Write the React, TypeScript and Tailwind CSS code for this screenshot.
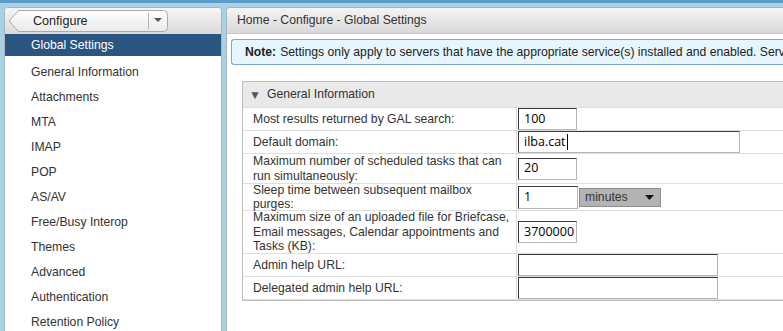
import React from 'react';

const NAV_ITEMS = [
  'General Information',
  'Attachments',
  'MTA',
  'IMAP',
  'POP',
  'AS/AV',
  'Free/Busy Interop',
  'Themes',
  'Advanced',
  'Authentication',
  'Retention Policy',
];

const inputBorder = 'border border-t-[#3a3a3a] border-l-[#3a3a3a] border-r-[#b5b5b5] border-b-[#b5b5b5] bg-white';
const inputText = "text-[12.5px] text-black font-['Open_Sans',sans-serif] px-[5px] leading-none flex items-center";

function TextBox({ value, width, height = 22, caret }: { value?: string; width: number; height?: number; caret?: boolean }) {
  return (
    <div className={`${inputBorder} ${inputText}`} style={{ width, height }}>
      {value}
      {caret && <span className="ml-px inline-block h-[16px] w-px bg-black" />}
    </div>
  );
}

function Row({ height, label, children }: { height: number; label: React.ReactNode; children: React.ReactNode }) {
  return (
    <div className="flex border-b border-[#dedede]" style={{ height }}>
      <div className="flex w-[274px] shrink-0 items-center whitespace-nowrap border-r border-[#dedede] pl-[10px] text-[12.2px] leading-[14.5px] text-[#333]">
        {label}
      </div>
      <div className="flex items-center pl-px">{children}</div>
    </div>
  );
}

export default function App() {
  return (
    <div className="h-[331px] w-[783px] overflow-hidden bg-[#a9d1e5] font-['Liberation_Sans',Arial,sans-serif]">
      <div className="h-[3px] bg-[#5c9ccb]" />
      <div className="flex gap-[4px] pl-[4px] pt-[4px]">
        {/* left nav */}
        <aside className="h-[330px] w-[218px] shrink-0 overflow-hidden rounded-t-[4px] border border-[#a9b4bb] bg-white">
          <div className="flex h-[26px] items-center bg-gradient-to-b from-[#f6f6f6] to-[#d9d9d9] pl-[3px]">
            <div className="relative flex h-[22px] w-[160px] items-center">
              <svg className="absolute left-0 top-0" width="160" height="22" viewBox="0 0 160 22">
                <defs>
                  <linearGradient id="btn" x1="0" y1="0" x2="0" y2="1">
                    <stop offset="0" stopColor="#ffffff" />
                    <stop offset="1" stopColor="#e9e9e9" />
                  </linearGradient>
                </defs>
                <path
                  d="M10.5 0.5 H155.5 Q159.5 0.5 159.5 4.5 V17.5 Q159.5 21.5 155.5 21.5 H10.5 L1 11 Z"
                  fill="url(#btn)"
                  stroke="#a8a8a8"
                />
                <line x1="140.5" y1="3" x2="140.5" y2="19" stroke="#b5b5b5" />
                <path d="M146 8 H154 L150 12 Z" fill="#555" />
              </svg>
              <span className="relative pl-[25px] text-[12.6px] text-[#222]">Configure</span>
            </div>
          </div>
          <div className="flex h-[22px] items-center bg-[#2b5581] pl-[26px] text-[12.2px] text-white">Global Settings</div>
          <ul className="pt-[4px]">
            {NAV_ITEMS.map((item) => (
              <li key={item} className="flex h-[25px] items-center pl-[26px] text-[12.2px] text-[#333]">
                {item}
              </li>
            ))}
          </ul>
        </aside>

        {/* main */}
        <main className="h-[330px] min-w-0 flex-1 overflow-hidden rounded-tl-[4px] border border-r-0 border-[#a9b4bb] bg-white">
          <div className="flex h-[26px] items-center border-b border-[#c8c8c8] bg-gradient-to-b from-[#f4f4f4] to-[#d9d9d9] pl-[10px] text-[12.2px] text-[#333]">
            Home - Configure - Global Settings
          </div>
          <div className="pl-[4px] pt-[5px]">
            <div className="flex h-[26px] w-[700px] items-center whitespace-nowrap rounded-l-[3px] border border-r-0 border-[#7ea7d8] bg-[#e7f5fd] pl-[13px] text-[12.2px] text-[#222]">
              <b className="mr-1">Note:</b>
              Settings only apply to servers that have the appropriate service(s) installed and enabled. Server
            </div>
          </div>
          <div className="pl-[15px] pt-[16px]">
            <section className="w-[700px] border border-r-0 border-[#bdbdbd]">
              <div className="flex h-[26px] items-center border-b border-[#dedede] bg-[#e9e9e9] pl-[6px] text-[12.2px] text-[#333]">
                <span className="w-[18px] text-[12px] text-[#555]">▼</span>
                General Information
              </div>
              <Row height={23} label="Most results returned by GAL search:">
                <TextBox value="100" width={59} />
              </Row>
              <Row height={23} label="Default domain:">
                <TextBox value="ilba.cat" width={222} caret />
              </Row>
              <Row
                height={30}
                label={
                  <span>
                    Maximum number of scheduled tasks that can
                    <br />
                    run simultaneously:
                  </span>
                }
              >
                <TextBox value="20" width={59} />
              </Row>
              <Row
                height={27}
                label={
                  <span>
                    Sleep time between subsequent mailbox
                    <br />
                    purges:
                  </span>
                }
              >
                <TextBox value="1" width={60} height={23} />
                <div className="ml-px flex h-[19px] w-[82px] items-center justify-between border border-[#8e8e8e] bg-[#b3b3b3] pl-[5px] pr-[6px] text-[12.2px] text-[#333]">
                  minutes
                  <svg width="9" height="5" viewBox="0 0 9 5">
                    <path d="M0 0 H9 L4.5 5 Z" fill="#111" />
                  </svg>
                </div>
              </Row>
              <Row
                height={43}
                label={
                  <span>
                    Maximum size of an uploaded file for Briefcase,
                    <br />
                    Email messages, Calendar appointments and
                    <br />
                    Tasks (KB):
                  </span>
                }
              >
                <TextBox value="3700000" width={59} />
              </Row>
              <Row height={23} label="Admin help URL:">
                <TextBox width={200} />
              </Row>
              <Row height={23} label="Delegated admin help URL:">
                <TextBox width={200} />
              </Row>
            </section>
          </div>
        </main>
      </div>
    </div>
  );
}
